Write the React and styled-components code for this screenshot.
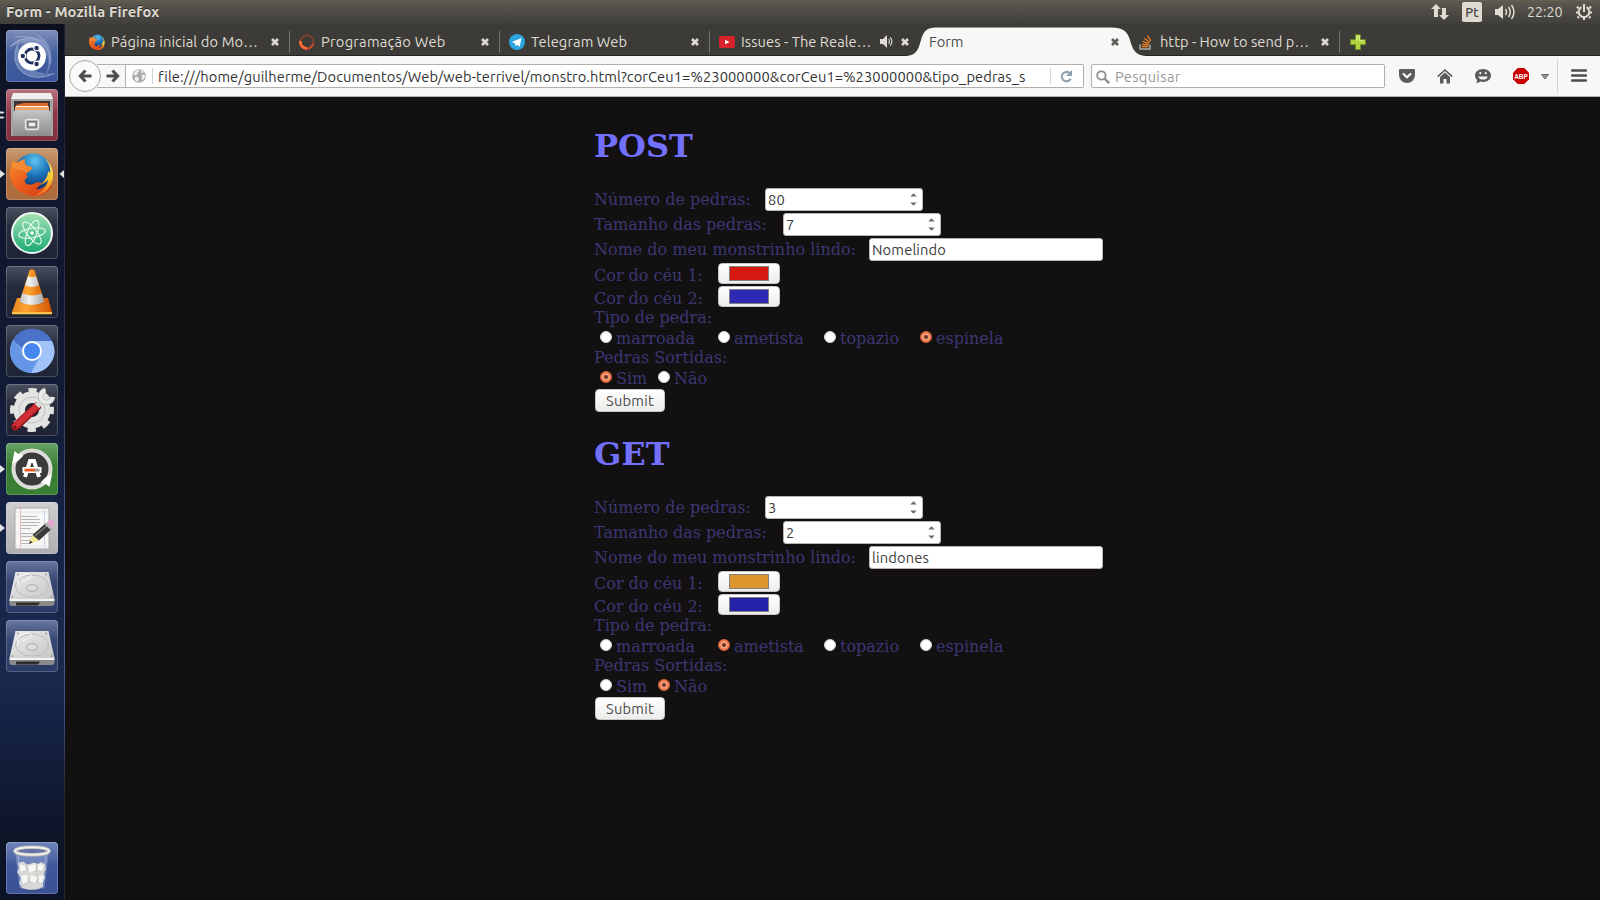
import React from "react";
import styled, { createGlobalStyle } from "styled-components";

const ui = `"Ubuntu", "Noto Sans", "Open Sans", sans-serif`;

const GlobalStyle = createGlobalStyle`
  * { box-sizing: border-box; }
  body { margin: 0; background: #121011; overflow: hidden; }
  svg { display: block; flex: none; }
`;

const Desktop = styled.div`
  width: 1600px;
  height: 900px;
  display: flex;
  flex-direction: column;
  font-family: ${ui};
  font-size: 14.67px;
`;

const Panel = styled.header`
  height: 24px;
  display: flex;
  align-items: center;
  padding: 0 8px 0 6px;
  background: linear-gradient(#65624f 0, #5b584f 2px, #504e47 10px, #3f3e3a 24px);
  color: #dfdbd2;
`;

const WindowTitle = styled.span`
  flex: 1;
  font-size: 14.67px;
  font-weight: 700;
  line-height: 24px;
  letter-spacing: 0.15px;
  text-shadow: 0 -1px #2b2a26;
`;

const Indicators = styled.div`
  display: flex;
  align-items: center;
`;

const Keyboard = styled.span`
  width: 20px;
  height: 20px;
  margin: 0 13px 0 13px;
  border-radius: 2px;
  background: #dfdbd2;
  color: #45433e;
  font-size: 13px;
  font-weight: 500;
  line-height: 20px;
  text-align: center;
`;

const Clock = styled.span`
  width: 37px;
  margin: 0 12px 0 12px;
  line-height: 24px;
  font-size: 14.2px;
  white-space: nowrap;
`;

const Workspace = styled.div`
  flex: 1;
  display: flex;
  min-height: 0;
`;

const Launcher = styled.nav`
  width: 65px;
  display: flex;
  flex-direction: column;
  justify-content: space-between;
  padding: 6px 0;
  border-right: 1px solid;
  border-image: linear-gradient(#1c2030, #2e3850 40%, #5468a0 65%, #3c4a78 80%, #2a2728 88%) 1;
  background: linear-gradient(#0b0f1e 0, #10172b 10%, #111a33 38%, #172347 58%, #1b294f 74%, #14203f 82%, #0e1529 92%, #0c1226);
`;

const LauncherGroup = styled.div`
  display: flex;
  flex-direction: column;
  gap: 7px;
`;

const LauncherItem = styled.div`
  display: flex;
  align-items: center;
  height: 52px;
`;

const Marks = styled.span`
  width: 6px;
  display: flex;
  flex-direction: column;
  gap: 2px;
`;

const Tile = styled.div`
  width: 52px;
  height: 52px;
  border-radius: 4px;
  border: 1px solid rgba(255, 255, 255, 0.2);
  background: ${(p) => p.$bg} border-box;
  margin-right: 1px;
`;

const Browser = styled.main`
  flex: 1;
  display: flex;
  flex-direction: column;
  min-width: 0;
`;

const TabStrip = styled.div`
  height: 32px;
  display: flex;
  padding-left: 15px;
  background: #3c3b37;
  border-bottom: 1px solid #242320;
`;

const Tab = styled.div`
  width: 210px;
  height: 31px;
  display: flex;
  align-items: center;
  padding: 4px 9px 0 9px;
  color: #dfdbd2;
  background: ${(p) => (p.$line ? "linear-gradient(#76746d, #76746d) right 7px / 1px 22px no-repeat" : "none")};
`;

const TabLabel = styled.span`
  flex: 1;
  margin-left: 6px;
  line-height: 22px;
  white-space: nowrap;
  letter-spacing: ${(p) => p.$ls || 0}px;
`;

const ActiveTab = styled.div`
  position: relative;
  width: 210px;
  height: 32px;
  display: flex;
  align-items: center;
  padding: 4px 9px 0 9px;
  color: #4c4c4c;
`;

const TabShape = styled.svg`
  position: absolute;
  left: -14px;
  top: 3px;
`;

const ActiveLabel = styled.span`
  position: relative;
  flex: 1;
  line-height: 22px;
`;

const CloseHolder = styled.span`
  position: relative;
  padding: 0 1px;
  margin-left: ${(p) => p.$gap || 0}px;
`;

const NewTab = styled.div`
  padding: 10px 0 0 10px;
`;

const Toolbar = styled.div`
  height: 41px;
  display: flex;
  align-items: center;
  padding-left: 4px;
  background: #f7f7f6;
  border-bottom: 1px solid #b1afac;
`;

const BackButton = styled.div`
  position: relative;
  z-index: 1;
  width: 32px;
  height: 32px;
  display: grid;
  place-items: center;
  border: 1px solid #aaa8a4;
  border-radius: 50%;
  background: #fafaf9;
`;

const ForwardButton = styled.div`
  width: 29px;
  height: 24px;
  margin-left: -4px;
  display: flex;
  align-items: center;
  padding-left: 9px;
  border: solid #b1afac;
  border-width: 1px 1px 1px 0;
`;

const AddressBar = styled.div`
  width: 958px;
  height: 24px;
  display: flex;
  align-items: center;
  padding-left: 6px;
  background: #fff;
  border: 1px solid #b1afac;
  border-left: 0;
  border-radius: 0 2px 2px 0;
`;

const Divider = styled.span`
  flex: none;
  width: 1px;
  margin-left: ${(p) => p.$gap || 0}px;
  height: ${(p) => p.$h || 16}px;
  background: #d4d4d2;
`;

const Address = styled.span`
  flex: none;
  width: 868px;
  margin: 0 24px 0 5px;
  padding-top: 1px;
  overflow: hidden;
  white-space: nowrap;
  line-height: 21px;
  color: #333;
  letter-spacing: 0.1px;
`;

const SearchBox = styled.div`
  width: 294px;
  height: 24px;
  margin-left: 7px;
  display: flex;
  align-items: center;
  padding: 1px 0 0 4px;
  gap: 5px;
  background: #fff;
  border: 1px solid #b1afac;
  border-radius: 2px;
  color: #9a9996;
  line-height: 21px;
  letter-spacing: 0.3px;
`;

const Tools = styled.div`
  display: flex;
  align-items: center;
  margin-left: 14px;
`;

const ToolSlot = styled.div`
  flex: none;
  width: ${(p) => p.$w}px;
  padding-left: ${(p) => p.$pad || 0}px;
  display: flex;
  align-items: center;
`;

const Page = styled.div`
  flex: 1;
  padding: 8px 0 0 529px;
  background: #121011;
  color: #3b3773;
  font-family: "DejaVu Serif", serif;
  font-size: 16px;
  line-height: 19px;
`;

const Heading = styled.h1`
  margin: 0;
  padding: 22px 0;
  height: 82px;
  line-height: 38px;
  font-size: 32px;
  color: #7370ff;
`;

const Form = styled.form`
  margin-bottom: 1px;
`;

const Field = styled.div`
  display: flex;
  height: ${(p) => p.$h || 25}px;
  padding-top: 1px;
`;

const FieldLabel = styled.label`
  width: ${(p) => p.$w}px;
  padding-top: ${(p) => p.$drop || 2}px;
  white-space: nowrap;
`;

const Input = styled.div`
  width: ${(p) => p.$w}px;
  height: 23px;
  display: flex;
  align-items: center;
  justify-content: space-between;
  padding: 0 5px 0 2px;
  border: 1px solid #b9b4ae;
  border-radius: 3px;
  background: #fff;
  color: #3c3c3c;
  font-family: ${ui};
  font-size: 14.67px;
  letter-spacing: 0.15px;
  line-height: 21px;
`;

const ColorButton = styled.div`
  width: 62px;
  height: 21px;
  padding: 2px 10px;
  border: 1px solid #c9c6c2;
  border-radius: 4px;
  background: linear-gradient(#fff, #ececeb);
`;

const Swatch = styled.div`
  height: 15px;
  border: 1px solid #808080;
  background: ${(p) => p.$color};
`;

const Line = styled.div`
  height: 19px;
`;

const Options = styled.div`
  height: 21px;
  display: flex;
  padding: 2px 0 0 6px;
`;

const Option = styled.label`
  width: ${(p) => p.$w}px;
  display: flex;
  gap: 4px;
  white-space: nowrap;
`;

const Radio = styled.span`
  flex: none;
  width: 12px;
  height: 12px;
  margin-top: 2px;
  border-radius: 50%;
  border: 1px solid ${(p) => (p.$on ? "#d9653a" : "#d5d3d0")};
  background: ${(p) => (p.$on ? "radial-gradient(circle, #6b3a28 0 1.5px, #f5a182 2.4px 3px, #ef7a4e 4.2px)" : "#fff")};
`;

const Submit = styled.button`
  display: block;
  width: 70px;
  height: 23px;
  margin: 1px 0 0 1px;
  padding: 0;
  border: 1px solid #c9c6c2;
  border-radius: 4px;
  background: linear-gradient(#fff, #ececeb);
  color: #4c4c4c;
  font-family: ${ui};
  font-size: 14.67px;
  letter-spacing: 0.2px;
  line-height: 21px;
`;

const Close = ({ color = "#dfdbd2" }) => (
  <svg width="10" height="10" viewBox="0 0 10 10">
    <path d="M2 2l6 6M8 2l-6 6" stroke={color} strokeWidth="2.6" />
  </svg>
);

const Arrow = ({ flip }) => (
  <svg width="14" height="14" viewBox="0 0 14 14">
    <path
      d="M7.5 1.5L2.3 7l5.2 5.5M3 7h10.5"
      transform={flip ? "translate(14 0) scale(-1 1)" : undefined}
      fill="none" stroke="#4c4c4c" strokeWidth="3"
    />
  </svg>
);

const FirefoxGlyph = ({ size }) => (
  <svg width={size} height={size} viewBox="0 0 44 44">
    <defs>
      <radialGradient id="ffb" cx=".55" cy=".2" r=".8">
        <stop offset="0" stopColor="#5cc4ee" /><stop offset=".5" stopColor="#1b72b8" /><stop offset="1" stopColor="#0b2a62" />
      </radialGradient>
      <linearGradient id="ffo" x1="0" y1="0" x2="1" y2="1">
        <stop offset="0" stopColor="#f58a2b" /><stop offset=".5" stopColor="#ea5a1c" /><stop offset="1" stopColor="#cf3c16" />
      </linearGradient>
      <linearGradient id="ffy" x1="0" y1="0" x2="0" y2="1">
        <stop offset="0" stopColor="#fff07a" /><stop offset=".55" stopColor="#fbc62f" /><stop offset="1" stopColor="#e9661c" />
      </linearGradient>
    </defs>
    <circle cx="23" cy="20" r="18.500" fill="url(#ffb)" />
    <path d="M3 8c1 2 2 3 4 3 2-2 5-3 8-4-1 3 0 5 2 7 2 1 5 0 5 2s-3 3-5 5c-1 3 1 3 0 5-2 1-3 2-2 4 2 4 7 3 10 1 3-1 6-1 7 1-2 0-3 3-6 5 6 1 11-3 13-8l3 5c-5 9-15 12-24 9C4 40-3 26 1 15c0-3 1-5 2-7z" fill="url(#ffo)" />
    <path d="M34 6c8 6 11 15 8 24-3 8-9 13-18 14 8-4 13-9 14-16-2 2-5 4-8 5 6-5 8-9 8-14l2 2c1-6-2-11-6-15z" fill="url(#ffy)" />
    <path d="M3 8c1 2 2 3 4 3 2-2 5-3 8-4-1 3 0 5 2 7 2 1 5 0 5 2s-3 3-5 5c-5-4-10-3-15-5 0-3 0-5 1-8z" fill="#f89a3c" opacity=".6" />
  </svg>
);

const Spinner = () => (
  <svg width="16" height="16" viewBox="0 0 16 16" fill="none">
    <circle cx="8" cy="8" r="6.5" stroke="#7b4131" strokeWidth="2.2" />
    <path d="M8 14.5A6.5 6.5 0 0 1 1.500 7" stroke="#ff6a38" strokeWidth="2.8" />
    <path d="M8 14.5A6.5 6.5 0 0 0 14 10" stroke="#c94c2a" strokeWidth="2.2" />
  </svg>
);

const Telegram = () => (
  <svg width="16" height="16" viewBox="0 0 16 16">
    <circle cx="8" cy="8" r="8" fill="#2ca5e0" />
    <path d="M2.8 8L12.5 4l-1.8 8.7-2.9-2-1.5 1.6-.2-2.8z" fill="#fff" />
  </svg>
);

const YouTube = () => (
  <svg width="16" height="16" viewBox="0 0 16 16">
    <rect y="2" width="16" height="12" rx="2" fill="#d8232a" />
    <path d="M6 5.8l4.500 2.2-4.500 2.300z" fill="#fff" />
  </svg>
);

const Stack = () => (
  <svg width="14" height="16" viewBox="0 0 14 16" fill="none">
    <path d="M1 10.5V15h10v-4.5" stroke="#a9adb0" strokeWidth="1.4" />
    <path d="M2.8 12.7h6.6M2.9 10.3l6.6.9M3.7 7.3l6.1 2.5M5.5 4.2l5.1 4.2M8.4 1.5l3.4 5.7" stroke="#f48024" strokeWidth="1.3" />
  </svg>
);

const Speaker = () => (
  <svg width="15" height="15" viewBox="0 0 15 15">
    <path d="M1 5h3l4-4v13l-4-4H1z" fill="#dfdbd2" />
    <path d="M9.7 5q1.5 2.5 0 5M11.3 3.3q3.2 4.2 0 8.4" fill="none" stroke="#dfdbd2" strokeWidth="1.1" />
  </svg>
);

const Plus = () => (
  <svg width="16" height="16" viewBox="0 0 16 16">
    <path d="M5.5.7h5v5h5v5h-5v4.8h-5v-4.8h-5v-5h5z" fill="#b2d53f" stroke="#6d8c2a" />
    <path d="M6.700 6.800V2h2.600v4.800H14" fill="none" stroke="#dcef93" />
  </svg>
);

const Globe = () => (
  <svg width="14" height="14" viewBox="0 0 14 14">
    <circle cx="7" cy="7" r="6.8" fill="#aaa" />
    <path d="M4 1.600l2.500-1 .5 1.600-1.500 1.300L6 5 3.600 6.300 1 5.500zM3 7.500l3 .7 1 2-1.500 2.800L3 11zM9 .900l2.600 1.800-1 1.500L9 3.400zM9.400 6l2.600-.6 1.300 2.300L11 11l-1.600-1 .6-2z" fill="#f0f0ef" />
  </svg>
);

const Reload = () => (
  <svg width="13" height="13" viewBox="0 0 13 13">
    <path d="M9.500 3A4.700 4.700 0 1 0 10.700 8.700" fill="none" stroke="#8ba0b3" strokeWidth="2.1" />
    <path d="M12 0v6H6z" fill="#8ba0b3" />
  </svg>
);

const Magnifier = () => (
  <svg width="14" height="14" viewBox="0 0 14 14">
    <circle cx="5.4" cy="5.4" r="4.2" fill="none" stroke="#8f8f8f" strokeWidth="1.9" />
    <path d="M8.6 8.6l4.6 4.6" stroke="#8f8f8f" strokeWidth="2.4" />
  </svg>
);

const Spin = () => (
  <svg width="7" height="13" viewBox="0 0 7 13">
    <path d="M.3 3.5L3.5.3l3.2 3.2zM.3 9.5l3.2 3.2 3.2-3.2z" fill="#6b6b6b" />
  </svg>
);

const Pointer = ({ left }) => (
  <svg width="5" height="8" viewBox="0 0 5 8">
    <path d={left ? "M5 0v8L.5 4z" : "M0 0l5 4-5 4z"} fill="#e2e3e6" />
  </svg>
);

const Icon = ({ children }) => (
  <svg width="50" height="50" viewBox="1 1 50 50">{children}</svg>
);

const UbuntuIcon = () => (
  <Icon>
    <path d="M4 17C14 3 46 4 44 34 41 17 20 8 4 17zM12 14C0 38 24 56 49 43 32 46 14 36 12 14zM27 3C46 8 52 30 38 48 46 32 44 13 27 3z" fill="#cbd5f2" opacity=".3" />
    <g fill="none" stroke="#c3cdec" opacity=".5">
      <path d="M4 17C14 3 46 4 44 34M12 14C0 38 24 56 49 43M9 7C20 6 30 7 38 12" />
    </g>
    <circle cx="26" cy="26.500" r="14" fill="#fff" />
    <circle cx="26" cy="26" r="7" fill="none" stroke="#22305e" strokeWidth="2.800" />
    <g fill="#22305e" stroke="#fff" strokeWidth="1.200"><circle cx="16.800" cy="26" r="2.800" /><circle cx="30.600" cy="18" r="2.800" /><circle cx="30.600" cy="34" r="2.800" /></g>
  </Icon>
);

const FilesIcon = () => (
  <Icon>
    <defs><linearGradient id="fl" x1="0" y1="0" x2="0" y2="1"><stop offset="0" stopColor="#c5c5c5" /><stop offset="1" stopColor="#8c8c8c" /></linearGradient></defs>
    <path d="M5 8h42v39H5z" fill="#a5a5a5" />
    <path d="M7 4h38l2 6H5z" fill="#eee" />
    <path d="M8 12h36v11H8z" fill="#40322e" />
    <path d="M10 16l8-2h24v8H10z" fill="#d96a2a" /><path d="M9 17.500h34V23H9z" fill="#f0a468" /><path d="M10 17.500h32" stroke="#fff3e4" />
    <path d="M9 21h34l2 3v23H7V24z" fill="url(#fl)" />
    <rect x="19.500" y="30.500" width="13" height="10" rx="2" fill="#a5a5a5" stroke="#e7e7e7" strokeWidth="1.400" />
    <rect x="22" y="33" width="8" height="5" fill="#eee" stroke="#555" />
  </Icon>
);

const AtomIcon = () => (
  <Icon>
    <defs><linearGradient id="at" x1="0" y1="0" x2="0" y2="1"><stop offset="0" stopColor="#a5e2b3" /><stop offset="1" stopColor="#19a874" /></linearGradient></defs>
    <circle cx="26" cy="26" r="20" fill="url(#at)" stroke="#f4f8f5" strokeWidth="2" />
    <g fill="none" stroke="#e9fff1" strokeWidth="1.100">
      <ellipse cx="26" cy="26" rx="13.500" ry="4.800" transform="rotate(-10 26 26)" />
      <ellipse cx="26" cy="26" rx="13.500" ry="4.800" transform="rotate(52 26 26)" />
      <ellipse cx="26" cy="26" rx="13.500" ry="4.800" transform="rotate(112 26 26)" />
    </g>
    <circle cx="26" cy="26" r="1.800" fill="#fff" />
  </Icon>
);

const VlcIcon = () => (
  <Icon>
    <defs>
      <linearGradient id="vl"><stop offset="0" stopColor="#e88420" /><stop offset=".35" stopColor="#ffa632" /><stop offset="1" stopColor="#cf5400" /></linearGradient>
      <linearGradient id="vw"><stop offset="0" stopColor="#bdbfbe" /><stop offset=".4" stopColor="#f1f1f1" /><stop offset="1" stopColor="#9fa1a1" /></linearGradient>
    </defs>
    <path d="M11 32h31l4 14H6z" fill="url(#vl)" /><path d="M6 46h40v2.300H6z" fill="#ffc04d" />
    <path d="M23.500 4.500Q26 2 28.500 4.500L39 37q-13 8-26 0z" fill="url(#vl)" />
    <path d="M22 10q4 2.500 8 0l3 9q-7 4-14 0zM16.500 27q9.500 5 19 0l3 9q-12.500 6-25 0z" fill="url(#vw)" />
  </Icon>
);

const ChromiumIcon = () => (
  <Icon>
    <circle cx="26" cy="26" r="22" fill="#6b9ee8" />
    <path d="M7 15A22 22 0 0 1 46 16H26a10 10 0 0 0-10 7z" fill="#4a72c8" />
    <path d="M46 16H26a10 10 0 0 1 9 14L25 48A22 22 0 0 0 46 16z" fill="#a1c3fa" />
    <path d="M7 15l9 15a10 10 0 0 0 14 5l-5 13A22 22 0 0 1 7 15z" fill="#6596e5" />
    <circle cx="26" cy="26" r="9" fill="#4587ee" stroke="#fff" strokeWidth="2" />
  </Icon>
);

const SettingsIcon = () => (
  <Icon>
    <circle cx="26" cy="26" r="19.500" fill="none" stroke="#e2e2e1" strokeWidth="5" strokeDasharray="8.300 7.016" strokeDashoffset="4.100" />
    <circle cx="26" cy="26" r="12.500" fill="none" stroke="#e3e3e2" strokeWidth="12" />
    <circle cx="26" cy="26" r="13" fill="none" stroke="#c2c2c2" />
    <circle cx="26" cy="26" r="7" fill="#20242e" />
    <path d="M9.500 42.500L31 22.500" stroke="#8c151a" strokeWidth="8.500" strokeLinecap="round" />
    <path d="M9.500 42L31 22" stroke="#d02f35" strokeWidth="6" strokeLinecap="round" />
    <path d="M31 22l6-6" stroke="#d7d9d7" strokeWidth="6" />
    <path d="M39.500 6.500a6 6 0 1 0 7 6.500" fill="none" stroke="#b9bbb9" strokeWidth="5.500" />
    <path d="M39.500 6.500a6 6 0 1 0 7 6.500" fill="none" stroke="#e9ebe9" strokeWidth="4" />
    <circle cx="9" cy="43" r="1.600" fill="#6f1115" />
  </Icon>
);

const UpdaterIcon = () => (
  <Icon>
    <circle cx="26" cy="26" r="18.500" fill="#3b3b3b" stroke="#dcdcd8" strokeWidth="4" />
    <path d="M19 34l5-16h4l5 16" fill="none" stroke="#fff" strokeWidth="4" />
    <path d="M16.500 24h19v6h-19z" fill="#fff" /><path d="M18.500 25.700h11v2.800h-11z" fill="#e65b22" /><path d="M29.500 25.700h4v2.800h-4z" fill="#999" />
    <path d="M6 21L8.500 8l3 2.500 6 2-5 5zM46 31l-2.500 13-3-2.500-6-2 5-5z" fill="#fff" />
  </Icon>
);

const EditorIcon = () => (
  <Icon>
    <path d="M9 6h34v41H9z" fill="#f6f6f5" stroke="#aaa" />
    <path d="M14.500 6v41" stroke="#f2b6b6" /><path d="M38.500 6v41" stroke="#c5d3ee" />
    <path d="M10 10h32M10 32h32M10 44h32" stroke="#dde6f2" />
    <path d="M15 14.500h16M15 17.500h19M15 20.500h19M15 23.500h17M15 26.500h10M15 31.500h17M15 34.500h14M15 38.500h10M15 41.500h8" stroke="#b5b5b5" />
    <path d="M23 42l3.500-9 6.500 5.500z" fill="#f2e68a" /><path d="M23 42l1.300-3.300 2.200 1.900z" fill="#222" />
    <path d="M26.500 33L40 21l6 5.500-13 12z" fill="#3a3a38" /><path d="M29 34l13-11.500" stroke="#777" strokeWidth="1.500" />
    <path d="M38.500 22.300L41 20l6 5.500-2.500 2.300z" fill="#bbb" /><path d="M41 20l3-2.500q4 0 4 4.500l-1.500 3.500z" fill="#e8a4cf" />
  </Icon>
);

const DriveIcon = () => (
  <Icon>
    <defs><linearGradient id="dr" x1="0" y1="0" x2="1" y2="1"><stop offset="0" stopColor="#ececec" /><stop offset="1" stopColor="#c6c6c6" /></linearGradient></defs>
    <path d="M9.500 11h33l6 27h-45z" fill="url(#dr)" />
    <path d="M3.500 39h45v4q-1 2-3 2h-39q-3 0-3-2z" fill="#8a8a8a" /><path d="M3.500 38h45v2h-45z" fill="#f3f3f3" /><path d="M10 41.500h24l-2 3H10z" fill="#2d2d2d" />
    <ellipse cx="26" cy="25" rx="16.500" ry="11" fill="none" stroke="#bcbcbc" />
    <ellipse cx="26" cy="27" rx="5.500" ry="3.300" fill="#dedede" stroke="#a7a7a7" />
    <path d="M12 24q-3-9 9-11 7 1 3 4-3 2-8 4" fill="none" stroke="#fbfbfb" />
    <g fill="#999"><circle cx="12" cy="13.500" r=".9" /><circle cx="40" cy="13.500" r=".9" /><circle cx="6.500" cy="36" r=".9" /><circle cx="45.500" cy="36" r=".9" /></g>
  </Icon>
);

const TrashIcon = () => (
  <Icon>
    <path d="M9 10h34l-4.500 36q-12.500 4-25 0z" fill="#93a6d3" opacity=".5" />
    <path d="M12 21l5-1.500 4 3 4-1 3-1 4 1.500 3-2 4 2 1 5-2 4 1 5-2 4v5l-5 2q-8 2-16-1l-3-5 2-5-4-6 2-4z" fill="#d6d8d5" />
    <path d="M14 22l5 2 1 4-6 2zM22 24l7-2 1 6-7 3zM33 22l5 1-2 6-5-2zM15 34l6-1 1 6-5 3zM25 33l6 2-1 6-6-2zM33 33l5 1-1 7-4-1z" fill="#f7f7f4" />
    <path d="M20 24l2 5M31 25l-1 5M22 37l2 4M32 37l-2 4" stroke="#b5bbb6" />
    <ellipse cx="26" cy="9" rx="17" ry="3.800" fill="#6173a5" stroke="#b9bcb8" strokeWidth="3.600" />
    <ellipse cx="26" cy="9" rx="17" ry="3.800" fill="none" stroke="#eeeeea" strokeWidth="2" />
    <path d="M12 14l4 31M40 14l-4 31" stroke="#c5cfea" opacity=".6" />
  </Icon>
);

const darkTile = "linear-gradient(#4a505f, #252b3b 40%, #1e2434)";
const blueTile = "linear-gradient(#68779f, #35456f 40%, #2a3a66)";

const FirefoxTile = () => (
  <Icon>
    <g transform="translate(4 4)"><FirefoxGlyph size={44} /></g>
  </Icon>
);

const launcherItems = [
  { icon: <UbuntuIcon />, bg: "linear-gradient(#7f8fb9, #4560a0 45%, #3a559a)" },
  { icon: <FilesIcon />, bg: "linear-gradient(#b87580, #8d3847 45%, #812f3f)", marks: "double" },
  { icon: <FirefoxTile />, bg: "linear-gradient(#c79b76, #b37242 45%, #ad6c3d)", marks: "single", focus: true },
  { icon: <AtomIcon />, bg: darkTile },
  { icon: <VlcIcon />, bg: darkTile },
  { icon: <ChromiumIcon />, bg: darkTile },
  { icon: <SettingsIcon />, bg: darkTile },
  { icon: <UpdaterIcon />, bg: "linear-gradient(#69a366, #397b35 45%, #377f32)", marks: "single" },
  { icon: <EditorIcon />, bg: "linear-gradient(#cfcfcf, #aeaeb0)", marks: "single" },
  { icon: <DriveIcon />, bg: blueTile },
  { icon: <DriveIcon />, bg: blueTile },
];

function LauncherEntry({ icon, bg, marks, focus }) {
  return (
    <LauncherItem>
      <Marks>
        {marks === "single" && <Pointer />}
        {marks === "double" && (
          <svg width="5" height="8" viewBox="0 0 5 8"><path d="M0 .5h3l1.500 1-1.500 1H0zM0 5.500h3l1.500 1-1.500 1H0z" fill="#e2e3e6" /></svg>
        )}
      </Marks>
      <Tile $bg={bg}>{icon}</Tile>
      {focus && <Pointer left />}
    </LauncherItem>
  );
}

const stones = [["marroada", 118], ["ametista", 106], ["topazio", 96], ["espinela", 90]];
const mixed = [["Sim", 58], ["Não", 58]];

function Choices({ items, value }) {
  return (
    <Options>
      {items.map(([name, w]) => (
        <Option key={name} $w={w}><Radio $on={name === value} />{name}</Option>
      ))}
    </Options>
  );
}

function MonsterForm({ title, count, size, name, sky1, sky2, stone, mix }) {
  return (
    <>
      <Heading>{title}</Heading>
      <Form>
        <Field><FieldLabel $w={171}>Número de pedras:</FieldLabel><Input $w={158}>{count}<Spin /></Input></Field>
        <Field><FieldLabel $w={189}>Tamanho das pedras:</FieldLabel><Input $w={158}>{size}<Spin /></Input></Field>
        <Field><FieldLabel $w={275}>Nome do meu monstrinho lindo:</FieldLabel><Input $w={234}>{name}</Input></Field>
        <Field $h={23}><FieldLabel $w={124} $drop={3}>Cor do céu 1:</FieldLabel><ColorButton><Swatch $color={sky1} /></ColorButton></Field>
        <Field $h={23}><FieldLabel $w={124} $drop={3}>Cor do céu 2:</FieldLabel><ColorButton><Swatch $color={sky2} /></ColorButton></Field>
        <Line>Tipo de pedra:</Line>
        <Choices items={stones} value={stone} />
        <Line>Pedras Sortidas:</Line>
        <Choices items={mixed} value={mix} />
        <Submit type="button">Submit</Submit>
      </Form>
    </>
  );
}

export default function App() {
  return (
    <Desktop>
      <GlobalStyle />
      <Panel>
        <WindowTitle>Form - Mozilla Firefox</WindowTitle>
        <Indicators>
          <svg width="18" height="18" viewBox="0 0 18 18"><path d="M5 1l5 5H7v8H3V6H0zM13 17l-5-5h3V5h4v7h3z" fill="#dfdbd2" /></svg>
          <Keyboard>Pt</Keyboard>
          <svg width="20" height="18" viewBox="0 0 20 18"><path d="M0 6h3l5-4v14l-5-4H0z" fill="#dfdbd2" /><path d="M10.500 6q2 3 0 6M13.500 4q3.500 5 0 10M16.500 2q5 7 0 14" fill="none" stroke="#dfdbd2" strokeWidth="1.500" /></svg>
          <Clock>22:20</Clock>
          <svg width="16" height="18" viewBox="0 0 16 18" fill="none" stroke="#dfdbd2">
            <path d="M5.500 4.200a5.300 5.300 0 1 0 5 0" strokeWidth="2" /><path d="M8 1v8" strokeWidth="2" />
            <path d="M2.600 5.200L1 3.600M13.400 5.200L15 3.600M2 9.500H0M14 9.500h2M3 13.500l-1.500 1.500M13 13.500l1.500 1.500M8 15v2" strokeWidth="2.200" />
          </svg>
        </Indicators>
      </Panel>
      <Workspace>
        <Launcher>
          <LauncherGroup>{launcherItems.map((item, i) => <LauncherEntry key={i} {...item} />)}</LauncherGroup>
          <LauncherEntry icon={<TrashIcon />} bg="linear-gradient(#6f85bc, #40589a 45%, #3a5294)" />
        </Launcher>
        <Browser>
          <TabStrip>
            <Tab $line><FirefoxGlyph size={16} /><TabLabel $ls={0.12}>Página inicial do Mo…</TabLabel><CloseHolder><Close /></CloseHolder></Tab>
            <Tab $line><Spinner /><TabLabel $ls={0.25}>Programação Web</TabLabel><CloseHolder><Close /></CloseHolder></Tab>
            <Tab $line><Telegram /><TabLabel $ls={0.1}>Telegram Web</TabLabel><CloseHolder><Close /></CloseHolder></Tab>
            <Tab><YouTube /><TabLabel $ls={0.05}>Issues - The Reale…</TabLabel><Speaker /><CloseHolder $gap={5}><Close /></CloseHolder></Tab>
            <ActiveTab>
              <TabShape width="240" height="29" viewBox="0 0 240 29">
                <path d="M0 29C10 28 12 24 15 13 18 3 21 1 30 .500H206C216 1 221 3 224 13 227 24 230 28 240 29z" fill="#f7f7f6" />
              </TabShape>
              <ActiveLabel>Form</ActiveLabel><CloseHolder><Close color="#5c5b57" /></CloseHolder>
            </ActiveTab>
            <Tab $line><Stack /><TabLabel $ls={0.03}>&#8202;http - How to send p…</TabLabel><CloseHolder><Close /></CloseHolder></Tab>
            <NewTab><Plus /></NewTab>
          </TabStrip>
          <Toolbar>
            <BackButton><Arrow /></BackButton>
            <ForwardButton><Arrow flip /></ForwardButton>
            <AddressBar>
              <Globe />
              <Divider $gap={6} />
              <Address>file:///home/guilherme/Documentos/Web/web-terrivel/monstro.html?corCeu1=%23000000&amp;corCeu1=%23000000&amp;tipo_pedras_s</Address>
              <Divider />
              <ToolSlot $w={32} $pad={9}><Reload /></ToolSlot>
            </AddressBar>
            <SearchBox><Magnifier />Pesquisar</SearchBox>
            <Tools>
              <ToolSlot $w={38}>
                <svg width="16" height="14" viewBox="0 0 16 14"><path d="M1 0h14q1 0 1 1v5a8 8 0 0 1-16 0V1q0-1 1-1z" fill="#5b5b5b" /><path d="M4.500 5L8 8.300 11.500 5" fill="none" stroke="#fff" strokeWidth="2" strokeLinecap="round" /></svg>
              </ToolSlot>
              <ToolSlot $w={38}>
                <svg width="16" height="15" viewBox="0 0 16 15"><path d="M.800 7.600L8 1l7.200 6.600" fill="none" stroke="#5b5b5b" strokeWidth="1.600" /><path d="M3 8l5-4.600L13 8v6.500H9.500V10h-3v4.500H3z" fill="#5b5b5b" /></svg>
              </ToolSlot>
              <ToolSlot $w={38}>
                <svg width="16" height="16" viewBox="0 0 16 16"><path d="M8 1c5 0 8 3 8 6.500S13 14 8 14q-1.500 0-2.500-.4Q4 15 1 15q1.300-1.400 1-3Q0 10 0 7.500C0 4 3 1 8 1z" fill="#5b5b5b" /><circle cx="5.300" cy="5.200" r="1.100" fill="#f7f7f6" /><circle cx="10.700" cy="5.200" r="1.100" fill="#f7f7f6" /><path d="M3.300 8.400h9.400q-1 3.200-4.700 3.200T3.300 8.400z" fill="#f7f7f6" /></svg>
              </ToolSlot>
              <ToolSlot $w={28}>
                <svg width="16" height="16" viewBox="0 0 16 16"><path d="M4.700 0h6.600L16 4.700v6.600L11.300 16H4.700L0 11.300V4.700z" fill="#c90000" /><text x="8" y="10.900" textAnchor="middle" fontFamily="Liberation Sans" fontWeight="700" fontSize="8" textLength="13.500" lengthAdjust="spacingAndGlyphs" fill="#fff">ABP</text></svg>
              </ToolSlot>
              <ToolSlot $w={16}><svg width="8" height="7" viewBox="0 0 8 7"><path d="M.500 1.500h7L4 6z" fill="#999" stroke="#666" /></svg></ToolSlot>
              <ToolSlot $w={14}><Divider $h={34} /></ToolSlot>
              <svg width="16" height="14" viewBox="0 0 16 14"><path d="M1 1.500h14M1 6.500h14M1 11.500h14" stroke="#4c4c4c" strokeWidth="2.400" strokeLinecap="round" /></svg>
            </Tools>
          </Toolbar>
          <Page>
            <MonsterForm title="POST" count="80" size="7" name="Nomelindo" sky1="#d51910" sky2="#2d29b5" stone="espinela" mix="Sim" />
            <MonsterForm title="GET" count="3" size="2" name="lindones" sky1="#dc962d" sky2="#2521a8" stone="ametista" mix="Não" />
          </Page>
        </Browser>
      </Workspace>
    </Desktop>
  );
}
